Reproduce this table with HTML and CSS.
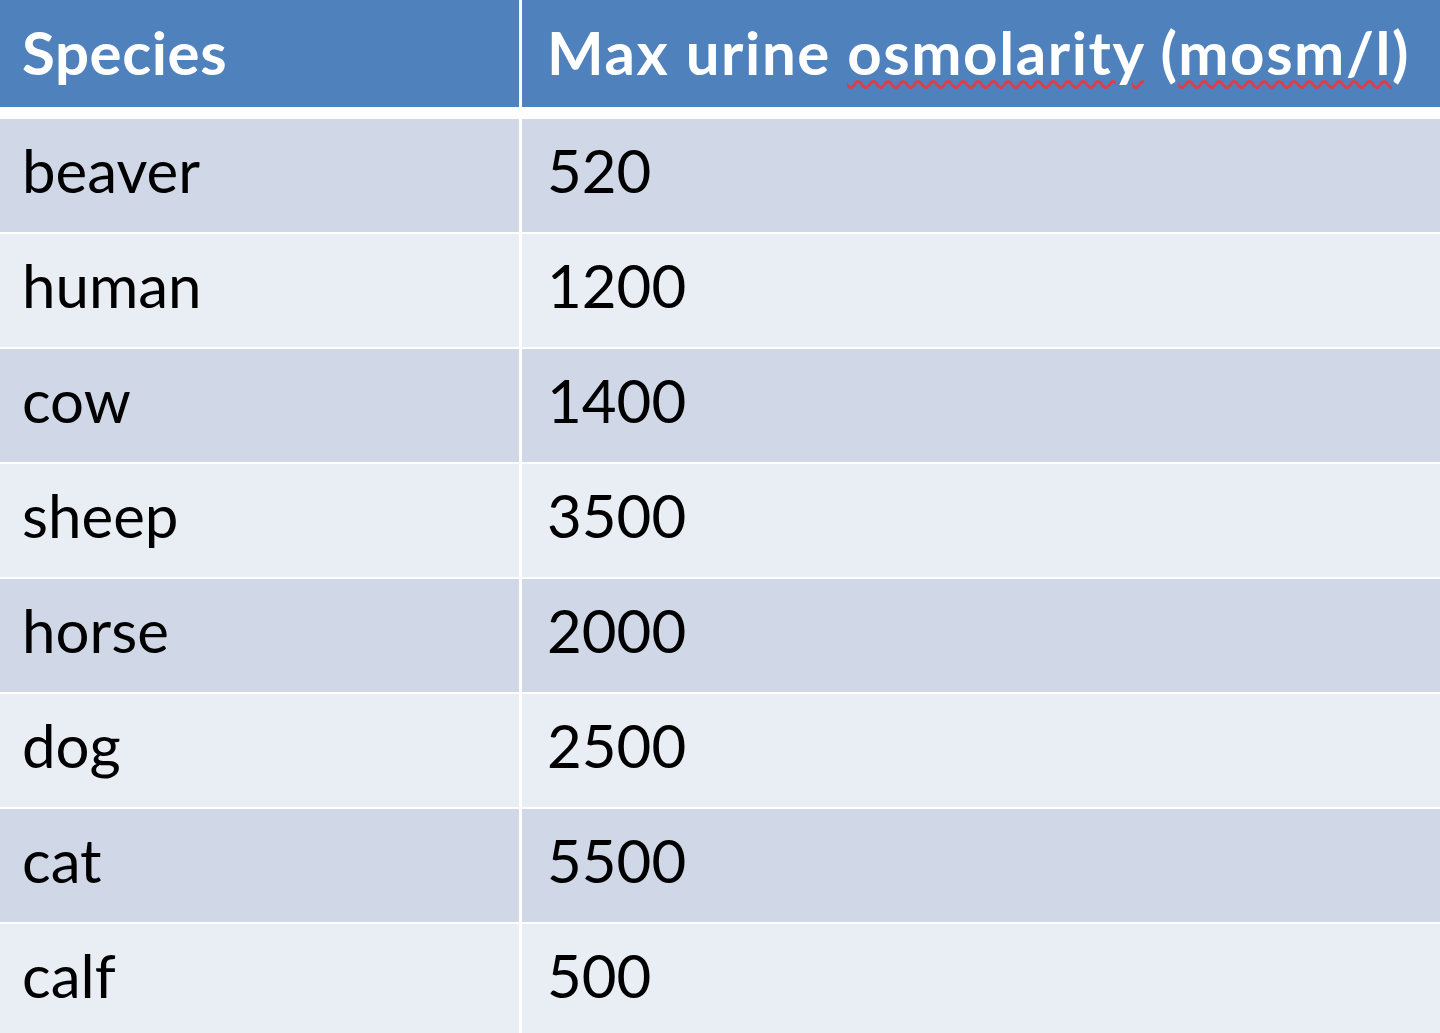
FILE: index.html
```html
<!DOCTYPE html>
<html>
<head>
<meta charset="utf-8">
<link rel="stylesheet" href="styles.css">
</head>
<body>
<div class="table">
  <div class="cell head"><span>Species</span></div>
  <div class="cell head head-wide"><span>Max urine <span class="spell">osmolarity</span> (<span class="spell">mosm/l</span>)</span></div>

  <div class="cell odd">beaver</div><div class="cell odd">520</div>
  <div class="cell even">human</div><div class="cell even">1200</div>
  <div class="cell odd">cow</div><div class="cell odd">1400</div>
  <div class="cell even">sheep</div><div class="cell even">3500</div>
  <div class="cell odd">horse</div><div class="cell odd">2000</div>
  <div class="cell even">dog</div><div class="cell even">2500</div>
  <div class="cell odd">cat</div><div class="cell odd">5500</div>
  <div class="cell even">calf</div><div class="cell even">500</div>
</div>
</body>
</html>
```
FILE: styles.css
```css
html, body {
  margin: 0;
  padding: 0;
  background: #ffffff;
  overflow: hidden;
}
body {
  width: 1440px;
  height: 1033px;
  font-family: "Lato", "Open Sans", sans-serif;
}
.table {
  display: grid;
  grid-template-columns: 519px 1fr;
  grid-template-rows: 117px repeat(8, 113px);
  column-gap: 3px;
  row-gap: 2px;
  background: #ffffff;
}
.cell {
  display: flex;
  align-items: center;
  padding-left: 22px;
  padding-bottom: 12px;
  font-size: 60px;
  color: #000000;
  white-space: nowrap;
  box-sizing: border-box;
}
.cell:nth-child(even) {
  padding-left: 25px;
}
.head {
  background: #4f81bd;
  color: #ffffff;
  font-weight: 700;
  border-bottom: 10px solid #ffffff;
  padding-bottom: 4px;
  letter-spacing: 0.6px;
}
.head-wide {
  letter-spacing: 1.6px;
}
.odd {
  background: #d0d8e8;
}
.even {
  background: #e9edf4;
}
.spell {
  text-decoration: underline wavy #d8404c;
  text-decoration-thickness: 3px;
  text-underline-offset: 5px;
}
```
